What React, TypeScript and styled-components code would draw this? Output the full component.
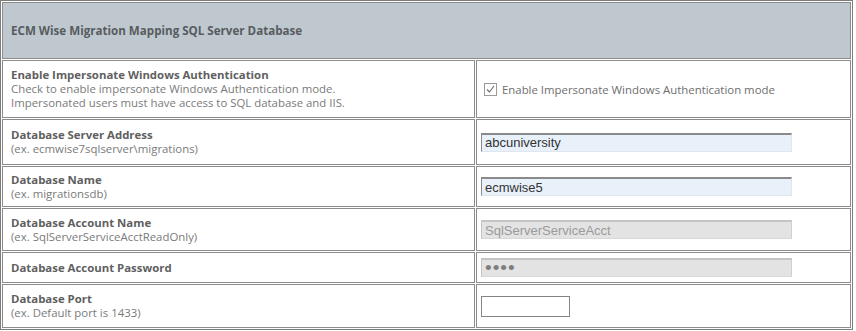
import React from "react";
import styled, { createGlobalStyle } from "styled-components";

const Global = createGlobalStyle`
  html, body { margin: 0; padding: 0; background: #ffffff; }
  body { font-family: "Open Sans", "Noto Sans", Arial, sans-serif; }
`;

const Table = styled.table`
  width: 853px;
  border: 1px solid #7d7d7d;
  border-spacing: 1px;
  border-collapse: separate;
  background: #ffffff;
  table-layout: fixed;
`;

const LabelCol = styled.col`
  width: 473px;
`;

const ValueCol = styled.col``;

const HeaderCell = styled.th`
  height: 54px;
  background: #bfc8ce;
  border: 1px solid #8c8c8c;
  padding: 0 0 1px 8px;
  text-align: left;
  font-family: "Open Sans", "Noto Sans", sans-serif;
  font-size: 11.6px;
  font-weight: 700;
  color: #575c60;
`;

const Row = styled.tr<{ $h: number }>`
  height: ${(p) => p.$h}px;
`;

const LabelCell = styled.td`
  border: 1px solid #8c8c8c;
  padding: 0 0 0 8px;
  vertical-align: middle;
  font-family: "Open Sans", "Noto Sans", sans-serif;
  font-size: 11.4px;
  line-height: 14px;
  color: #7a7a7a;
  white-space: nowrap;
`;

const ValueCell = styled.td`
  border: 1px solid #8c8c8c;
  padding: 0 0 0 4px;
  vertical-align: middle;
`;

const Title = styled.div`
  font-weight: 700;
  color: #5f5f5f;
`;

const Hint = styled.div`
  color: #7a7a7a;
`;

const TextInput = styled.input<{ $disabled?: boolean; $secret?: boolean }>`
  box-sizing: border-box;
  display: block;
  width: 311px;
  height: 19px;
  margin: 0;
  padding: 0 3px;
  font-family: "Liberation Sans", Arial, sans-serif;
  font-size: ${(p) => (p.$secret ? "19px" : "13px")};
  letter-spacing: ${(p) => (p.$secret ? "1px" : "0")};
  color: ${(p) => (p.$disabled ? (p.$secret ? "#7e7e7e" : "#9a9a9a") : "#333333")};
  background: ${(p) => (p.$disabled ? "#e3e3e3" : "#e8f0fa")};
  border-style: solid;
  border-width: 2px 1px 1px 1px;
  border-color: ${(p) =>
    p.$disabled
      ? "#c4c4c4 #d0d0d0 #d8d8d8 #c4c4c4"
      : "#8a8a8a #e0e6ee #e0e6ee #8a8a8a"};
  outline: none;
`;

const PortInput = styled.input`
  box-sizing: border-box;
  display: block;
  width: 89px;
  height: 21px;
  margin: 0;
  padding: 0 3px;
  background: #ffffff;
  border: 1px solid #858585;
  outline: none;
`;

const CheckLabel = styled.label`
  display: flex;
  align-items: center;
  gap: 5px;
  padding-left: 3px;
  font-family: "Open Sans", "Noto Sans", sans-serif;
  font-size: 11.4px;
  color: #6e6e6e;
`;

const CheckBox = styled.span`
  box-sizing: border-box;
  width: 13px;
  height: 13px;
  border: 1px solid #9a9a9a;
  background: #ffffff;
  display: inline-flex;
  align-items: center;
  justify-content: center;
`;

const Check = () => (
  <CheckBox>
    <svg width="11" height="11" viewBox="0 0 11 11">
      <path d="M2 5.5 L4.5 8 L9 2" fill="none" stroke="#6a6a6a" strokeWidth="1.1" />
    </svg>
  </CheckBox>
);

export default function App() {
  return (
    <>
      <Global />
      <Table>
        <colgroup>
          <LabelCol />
          <ValueCol />
        </colgroup>
        <tbody>
          <tr>
            <HeaderCell colSpan={2}>ECM Wise Migration Mapping SQL Server Database</HeaderCell>
          </tr>
          <Row $h={58}>
            <LabelCell>
              <Title>Enable Impersonate Windows Authentication</Title>
              <Hint>Check to enable impersonate Windows Authentication mode.</Hint>
              <Hint>Impersonated users must have access to SQL database and IIS.</Hint>
            </LabelCell>
            <ValueCell>
              <CheckLabel>
                <Check />
                Enable Impersonate Windows Authentication mode
              </CheckLabel>
            </ValueCell>
          </Row>
          <Row $h={46}>
            <LabelCell>
              <Title>Database Server Address</Title>
              <Hint>(ex. ecmwise7sqlserver\migrations)</Hint>
            </LabelCell>
            <ValueCell>
              <TextInput readOnly value="abcuniversity" />
            </ValueCell>
          </Row>
          <Row $h={41}>
            <LabelCell>
              <Title>Database Name</Title>
              <Hint>(ex. migrationsdb)</Hint>
            </LabelCell>
            <ValueCell>
              <TextInput readOnly value="ecmwise5" />
            </ValueCell>
          </Row>
          <Row $h={43}>
            <LabelCell>
              <Title>Database Account Name</Title>
              <Hint>(ex. SqlServerServiceAcctReadOnly)</Hint>
            </LabelCell>
            <ValueCell>
              <TextInput readOnly $disabled value="SqlServerServiceAcct" />
            </ValueCell>
          </Row>
          <Row $h={31}>
            <LabelCell>
              <Title>Database Account Password</Title>
            </LabelCell>
            <ValueCell>
              <TextInput readOnly $disabled $secret type="password" value="abcd" />
            </ValueCell>
          </Row>
          <Row $h={44}>
            <LabelCell>
              <Title>Database Port</Title>
              <Hint>(ex. Default port is 1433)</Hint>
            </LabelCell>
            <ValueCell>
              <PortInput readOnly value="" />
            </ValueCell>
          </Row>
        </tbody>
      </Table>
    </>
  );
}
